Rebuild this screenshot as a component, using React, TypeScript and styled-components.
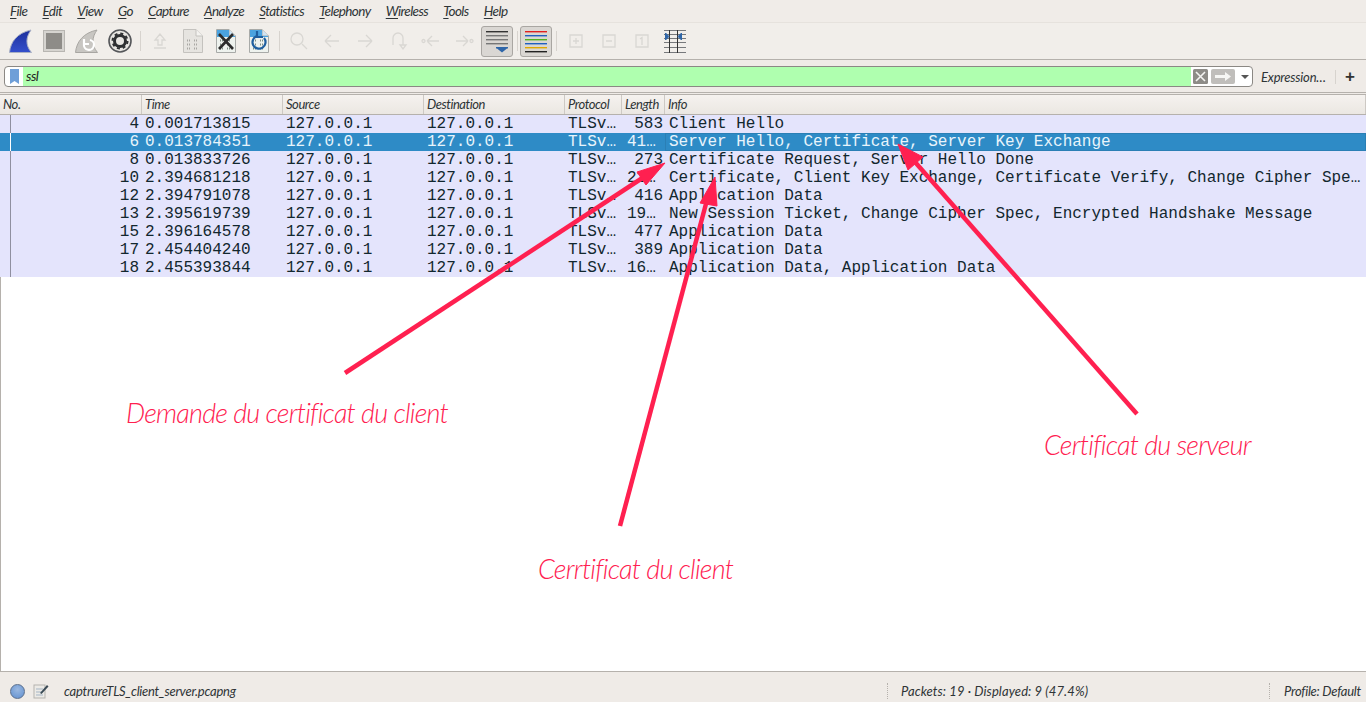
import styled, { createGlobalStyle } from "styled-components";

const GlobalStyle = createGlobalStyle`
  html, body {
    margin: 0;
    padding: 0;
    height: 100%;
    overflow: hidden;
    background: #efebe7;
  }
`;

const uiFont = `"Lato", "Open Sans", sans-serif`;
const columns = "142px 141px 141px 141px 57px 43px 1fr";
const accent = "#ff2050";

const Window = styled.div`
  position: relative;
  width: 1366px;
  height: 702px;
  display: flex;
  flex-direction: column;
  overflow: hidden;
  background: #efebe7;
  font-family: ${uiFont};
  font-style: italic;
  font-size: 13px;
  color: #2e3436;
`;

const MenuBar = styled.div`
  height: 22px;
  display: flex;
  align-items: center;
  padding: 0 0 1px 10px;
  gap: 15.2px;
  background: #f0ece8;
  box-sizing: border-box;
`;

const MenuItem = styled.span`
  font-size: 13.5px;
  letter-spacing: -0.6px;
  color: #2e3436;
  & u {
    text-underline-offset: 2px;
  }
`;

const ToolBar = styled.div`
  height: 38px;
  display: flex;
  align-items: center;
  box-sizing: border-box;
  padding-left: 4px;
  border-top: 1px solid #e6e2dd;
  border-bottom: 1px solid #b5b1ac;
  background: #f1eeea;
`;

const ToolSlot = styled.div<{ $pressed?: boolean }>`
  width: ${(p) => (p.$pressed ? 32 : 33)}px;
  height: 31px;
  display: flex;
  align-items: center;
  justify-content: center;
  flex: none;
  box-sizing: border-box;
  ${(p) =>
    p.$pressed &&
    `
    background: #dad7d3;
    border: 1px solid #a9a6a2;
    border-radius: 3px;
  `}
`;

const ToolSep = styled.div`
  width: 1px;
  height: 20px;
  margin: 0 2px 0 4px;
  background: #d7d3ce;
  flex: none;
`;

const PressedGap = styled.div`
  width: 1px;
  flex: none;
`;

const FilterRow = styled.div`
  height: 33px;
  display: flex;
  align-items: center;
  box-sizing: border-box;
  padding: 1px 8px 0 4px;
  background: #efebe7;
  border-bottom: 1px solid #b5b1ac;
`;

const FilterBox = styled.div`
  width: 1249px;
  height: 21px;
  display: flex;
  align-items: stretch;
  box-sizing: border-box;
  border: 1px solid #8b8884;
  border-radius: 4px;
  background: #fff;
  overflow: hidden;
  flex: none;
`;

const BookmarkCell = styled.div`
  width: 18px;
  display: flex;
  align-items: center;
  justify-content: center;
  flex: none;
`;

const FilterInput = styled.div`
  flex: 1;
  background: #afffaf;
  padding-left: 3px;
  font-size: 13.5px;
  letter-spacing: -0.5px;
  line-height: 18px;
  color: #222;
`;

const FilterActions = styled.div`
  width: 61px;
  display: flex;
  align-items: center;
  gap: 3px;
  padding-left: 2px;
  box-sizing: border-box;
  flex: none;
`;

const ExpressionLink = styled.span`
  margin-left: 8px;
  font-size: 13px;
  letter-spacing: -0.2px;
  width: 74px;
  flex: none;
`;

const FilterSep = styled.div`
  width: 1px;
  height: 14px;
  background: #d7d3ce;
  flex: none;
`;

const PlusButton = styled.span`
  margin-left: 9px;
  font: bold 17px "Liberation Sans", sans-serif;
  color: #333;
`;

const PacketPane = styled.div`
  flex: 1;
  margin-top: 1px;
  display: flex;
  flex-direction: column;
  background: #fff;
  border: 1px solid #b5b1ac;
  border-right: none;
  box-sizing: border-box;
  min-height: 0;
`;

const HeaderRow = styled.div`
  height: 20px;
  display: grid;
  grid-template-columns: ${columns};
  box-sizing: border-box;
  background: linear-gradient(#f5f2ef, #ebe7e2);
  border-bottom: 1px solid #b5b1ac;
  margin-left: -1px;
`;

const HeaderCell = styled.div`
  padding-left: 3px;
  line-height: 19px;
  font-size: 13px;
  letter-spacing: -0.45px;
  border-right: 1px solid #cdc9c4;
  white-space: nowrap;
  overflow: hidden;
  box-sizing: border-box;
`;

const PacketRow = styled.div<{ $selected?: boolean }>`
  position: relative;
  height: 18px;
  display: grid;
  grid-template-columns: ${columns};
  margin-left: -1px;
  background: ${(p) => (p.$selected ? "#2e8bc6" : "#e4e4fc")};
  color: ${(p) => (p.$selected ? "#e8f4fb" : "#12272e")};
  font: 16px/18px "Liberation Mono", monospace;
  white-space: nowrap;
`;

// the thin conversation line on the left of the list
const ThreadLine = styled.span<{ $selected?: boolean }>`
  position: absolute;
  left: 10px;
  top: 0;
  bottom: 0;
  width: 1px;
  background: ${(p) => (p.$selected ? "#fff" : "#8f8fa0")};
`;

const Cell = styled.div<{ $right?: boolean; $pad?: number; $end?: number }>`
  overflow: hidden;
  box-sizing: border-box;
  text-align: ${(p) => (p.$right ? "right" : "left")};
  padding-left: ${(p) => p.$pad ?? 3}px;
  padding-right: ${(p) => p.$end ?? 0}px;
`;

const InfoCell = styled(Cell)<{ $focus?: boolean }>`
  padding-left: 4px;
  ${(p) => p.$focus && "outline: 1px solid #2a7fb5; outline-offset: -1px;"}
`;

const StatusBar = styled.div`
  height: 30px;
  flex: none;
  display: flex;
  align-items: center;
  position: relative;
  box-sizing: border-box;
  padding-top: 8px;
  background: #efebe7;
  font-size: 13px;
  letter-spacing: -0.25px;
`;

const StatusDot = styled.span`
  width: 13px;
  height: 13px;
  margin-left: 10px;
  border-radius: 50%;
  background: radial-gradient(circle at 50% 35%, #9ab8e0, #5f8fd0);
  border: 1px solid #5b6f8c;
  flex: none;
`;

const EditIcon = styled.svg`
  margin-left: 8px;
  flex: none;
`;

const FileName = styled.span`
  margin-left: 15px;
  width: 823px;
  flex: none;
`;

const Grip = styled.div`
  position: absolute;
  left: 676px;
  top: 2px;
  width: 16px;
  height: 5px;
  background-image: radial-gradient(#b5b1ac 0.6px, transparent 0.7px);
  background-size: 2px 2px;
`;

const StatusSep = styled.span`
  height: 16px;
  border-left: 1px dotted #b5b1ac;
  flex: none;
`;

const PacketCount = styled.span`
  margin-left: 13px;
  width: 368px;
  flex: none;
  letter-spacing: 0.1px;
  white-space: nowrap;
`;

const ProfileText = styled.span`
  margin-left: 14px;
  white-space: nowrap;
`;

const Arrows = styled.svg`
  position: absolute;
  inset: 0;
  pointer-events: none;
`;

const Note = styled.div<{ $x: number; $y: number }>`
  position: absolute;
  left: ${(p) => p.$x}px;
  top: ${(p) => p.$y}px;
  font-family: ${uiFont};
  font-style: italic;
  font-weight: 300;
  font-size: 27px;
  line-height: 32px;
  color: ${accent};
  white-space: nowrap;
  letter-spacing: -0.78px;
`;

function SharkFin({ grey }: { grey?: boolean }) {
  return (
    <svg width="24" height="25" viewBox="0 0 24 25">
      <defs>
        <linearGradient id="finBlue" x1="0" y1="0" x2="0" y2="1">
          <stop offset="0" stopColor="#1c2f9c" />
          <stop offset="1" stopColor="#3550cc" />
        </linearGradient>
      </defs>
      <path
        d="M0.5 23.5 C1.5 13 8 4 22 1 C17 8 16 16 22.5 23.5 Z"
        fill={grey ? "#c8c6c2" : "url(#finBlue)"}
        stroke={grey ? "#a8a6a2" : "#a9b0c4"}
        strokeWidth="1"
      />
      {grey && (
        <path d="M15 11 a5 5 0 1 1 -6 4 M9 10 v5 h5" stroke="#fff" strokeWidth="2.2" fill="none" />
      )}
    </svg>
  );
}

function StopIcon() {
  return (
    <svg width="22" height="22" viewBox="0 0 22 22">
      <rect x="0.5" y="0.5" width="21" height="21" fill="#d6d4d0" stroke="#b8b6b2" />
      <rect x="3" y="3" width="16" height="16" fill="#8e8c88" />
    </svg>
  );
}

function GearIcon() {
  return (
    <svg width="24" height="24" viewBox="0 0 24 24">
      <circle cx="12" cy="12" r="11" fill="#e8e6e2" stroke="#55575a" strokeWidth="1.6" />
      <circle cx="12" cy="12" r="5.5" fill="none" stroke="#2e3032" strokeWidth="3" />
      <circle cx="12" cy="12" r="7.5" fill="none" stroke="#2e3032" strokeWidth="2" strokeDasharray="3 2.9" />
    </svg>
  );
}

function FileIcon({ kind }: { kind: "plain" | "close" | "reload" }) {
  const faded = kind === "plain";
  return (
    <svg width="20" height="24" viewBox="0 0 20 24">
      <path
        d="M0.5 0.5 H13 L19.5 7 V23.5 H0.5 Z"
        fill={faded ? "#e6e4e0" : "#eef2ee"}
        stroke={faded ? "#c4c2be" : "#a8aaa8"}
      />
      <path d="M13 0.5 V7 H19.5" fill={faded ? "#f4f3f0" : "#cfe4f4"} stroke={faded ? "#c4c2be" : "#a8aaa8"} />
      {!faded && <path d="M1 1 H13 V7 H19 V8 H1 Z" fill="#4aa3e0" />}
      <path
        d="M4 11.5h4M11 11.5h4M4 15.5h4M11 15.5h4M4 19.5h4M11 19.5h4"
        stroke={faded ? "#a9a7a3" : "#7f8f85"}
        strokeDasharray="1 1"
        strokeWidth="2"
      />
      {kind === "close" && <path d="M3 5 L17 20 M17 5 L3 20" stroke="#2c2c2c" strokeWidth="2.6" />}
      {kind === "reload" && (
        <path d="M15 9 a6.5 6.5 0 1 1 -7 -2 M8 2 v6 h6" stroke="#1f5f9f" strokeWidth="2.2" fill="none" />
      )}
    </svg>
  );
}

function Faint({ d }: { d: string }) {
  return (
    <svg width="20" height="20" viewBox="0 0 20 20" fill="none" stroke="#d9d7d3" strokeWidth="1.3">
      <path d={d} />
    </svg>
  );
}

function LinesIcon({ colors, marker }: { colors: string[]; marker?: boolean }) {
  return (
    <svg width="22" height="23" viewBox="0 0 22 23">
      {colors.map((c, i) => (
        <rect key={i} x="0" y={1 + i * 4} width="22" height="1.4" fill={c} />
      ))}
      {marker && <path d="M10 17 h12 v1.5 h-12 Z M11 18.5 h10 l-5 4 Z" fill="#2f66a8" />}
    </svg>
  );
}

function ResizeColumnsIcon() {
  return (
    <svg width="22" height="23" viewBox="0 0 22 23">
      {[0, 4, 8, 12, 17, 22].map((y) => (
        <rect key={y} x="0" y={y} width="22" height="1" fill="#77797c" />
      ))}
      <rect x="5" y="0" width="1" height="23" fill="#333" />
      <rect x="13" y="0" width="1" height="23" fill="#333" />
      <path d="M1.5 3 L5 6.5 L1.5 10 Z M17.5 3 L14 6.5 L17.5 10 Z" fill="#2f66a8" stroke="#2f66a8" />
    </svg>
  );
}

const menus: [string, string][] = [
  ["F", "ile"],
  ["E", "dit"],
  ["V", "iew"],
  ["G", "o"],
  ["C", "apture"],
  ["A", "nalyze"],
  ["S", "tatistics"],
  ["T", "elephony"],
  ["W", "ireless"],
  ["T", "ools"],
  ["H", "elp"],
];

const headers = ["No.", "Time", "Source", "Destination", "Protocol", "Length", "Info"];

const packets = [
  ["4", "0.001713815", "583", "Client Hello"],
  ["6", "0.013784351", "41…", "Server Hello, Certificate, Server Key Exchange"],
  ["8", "0.013833726", "273", "Certificate Request, Server Hello Done"],
  ["10", "2.394681218", "21…", "Certificate, Client Key Exchange, Certificate Verify, Change Cipher Spe…"],
  ["12", "2.394791078", "416", "Application Data"],
  ["13", "2.395619739", "19…", "New Session Ticket, Change Cipher Spec, Encrypted Handshake Message"],
  ["15", "2.396164578", "477", "Application Data"],
  ["17", "2.454404240", "389", "Application Data"],
  ["18", "2.455393844", "16…", "Application Data, Application Data"],
];

export default function App() {
  return (
    <Window>
      <GlobalStyle />
      <MenuBar>
        {menus.map(([key, rest], i) => (
          <MenuItem key={i}>
            <u>{key}</u>
            {rest}
          </MenuItem>
        ))}
      </MenuBar>

      <ToolBar>
        <ToolSlot><SharkFin /></ToolSlot>
        <ToolSlot><StopIcon /></ToolSlot>
        <ToolSlot><SharkFin grey /></ToolSlot>
        <ToolSlot><GearIcon /></ToolSlot>
        <ToolSep />
        <ToolSlot><Faint d="M10 3 L5 9 H8 V14 H12 V9 H15 Z M4 17 H16" /></ToolSlot>
        <ToolSlot><FileIcon kind="plain" /></ToolSlot>
        <ToolSlot><FileIcon kind="close" /></ToolSlot>
        <ToolSlot><FileIcon kind="reload" /></ToolSlot>
        <ToolSep />
        <ToolSlot><Faint d="M13 13 L18 18 M14 8 a6 6 0 1 1 -12 0 a6 6 0 1 1 12 0" /></ToolSlot>
        <ToolSlot><Faint d="M3 10 H17 M3 10 L9 4 M3 10 L9 16" /></ToolSlot>
        <ToolSlot><Faint d="M3 10 H17 M17 10 L11 4 M17 10 L11 16" /></ToolSlot>
        <ToolSlot><Faint d="M5 14 V7 a5 5 0 0 1 10 0 V14 M12 14 h6 l-3 4 Z" /></ToolSlot>
        <ToolSlot><Faint d="M6 10 H18 M6 10 L11 5 M6 10 L11 15 M1 10 a1.5 1.5 0 1 0 3 0 a1.5 1.5 0 1 0 -3 0" /></ToolSlot>
        <ToolSlot><Faint d="M2 10 H14 M14 10 L9 5 M14 10 L9 15 M16 10 a1.5 1.5 0 1 0 3 0 a1.5 1.5 0 1 0 -3 0" /></ToolSlot>
        <PressedGap />
        <ToolSlot $pressed>
          <LinesIcon colors={["#333", "#777", "#777", "#777"]} marker />
        </ToolSlot>
        <ToolSep />
        <ToolSlot $pressed>
          <LinesIcon colors={["#e02020", "#2060c0", "#50b020", "#2060c0", "#e0a800", "#222"]} />
        </ToolSlot>
        <ToolSep />
        <ToolSlot><Faint d="M4 4 H16 V16 H4 Z M7 10 H13 M10 7 V13" /></ToolSlot>
        <ToolSlot><Faint d="M4 4 H16 V16 H4 Z M7 10 H13" /></ToolSlot>
        <ToolSlot><Faint d="M4 4 H16 V16 H4 Z M8 8 L10 6.5 V14" /></ToolSlot>
        <ToolSlot><ResizeColumnsIcon /></ToolSlot>
      </ToolBar>

      <FilterRow>
        <FilterBox>
          <BookmarkCell>
            <svg width="9" height="15" viewBox="0 0 9 15">
              <path d="M0 0 H9 V15 L4.5 12 L0 15 Z" fill="#6f9fd8" />
            </svg>
          </BookmarkCell>
          <FilterInput>ssl</FilterInput>
          <FilterActions>
            <svg width="15" height="15" viewBox="0 0 15 15">
              <rect width="15" height="15" rx="1.5" fill="#8e8c88" />
              <path d="M3 3 L12 12 M12 3 L3 12" stroke="#f4f4f2" strokeWidth="1.6" />
            </svg>
            <svg width="24" height="15" viewBox="0 0 24 15">
              <rect width="24" height="15" rx="2" fill="#c0bebb" />
              <path d="M4 6 H14 V3 L20 7.5 L14 12 V9 H4 Z" fill="#f6f6f4" />
            </svg>
            <svg width="14" height="15" viewBox="0 0 14 15">
              <path d="M3 6 H11 L7 10 Z" fill="#555" />
            </svg>
          </FilterActions>
        </FilterBox>
        <ExpressionLink>Expression…</ExpressionLink>
        <FilterSep />
        <PlusButton>+</PlusButton>
      </FilterRow>

      <PacketPane>
        <HeaderRow>
          {headers.map((h) => (
            <HeaderCell key={h}>{h}</HeaderCell>
          ))}
        </HeaderRow>
        {packets.map(([no, time, len, info], i) => {
          const elided = len.endsWith("…");
          return (
            <PacketRow key={no} $selected={i === 1}>
              <ThreadLine $selected={i === 1} />
              <Cell $right $end={3}>{no}</Cell>
              <Cell>{time}</Cell>
              <Cell>127.0.0.1</Cell>
              <Cell>127.0.0.1</Cell>
              <Cell>TLSv…</Cell>
              <Cell $right={!elided} $pad={elided ? 5 : 0} $end={elided ? 0 : 2}>{len}</Cell>
              <InfoCell $focus={i === 1}>{info}</InfoCell>
            </PacketRow>
          );
        })}
      </PacketPane>

      <StatusBar>
        <Grip />
        <StatusDot />
        <EditIcon width="16" height="16" viewBox="0 0 16 16">
          <rect x="1" y="2" width="11" height="13" fill="#eceae6" stroke="#b5b3af" />
          <path d="M3 6h7M3 9h7M3 12h7" stroke="#a5b5c5" />
          <path d="M7 10 L14 2 L15.5 3.5 L8.5 11 Z" fill="#3a4a55" />
        </EditIcon>
        <FileName>captrureTLS_client_server.pcapng</FileName>
        <StatusSep />
        <PacketCount>Packets: 19 · Displayed: 9 (47.4%)</PacketCount>
        <StatusSep />
        <ProfileText>Profile: Default</ProfileText>
      </StatusBar>

      <Arrows width="1366" height="702" viewBox="0 0 1366 702">
        <g stroke={accent} strokeWidth="4.5" fill={accent}>
          <path d="M345 373 L650 173" fill="none" />
          <path d="M665 163 L637 172 L646 185 Z" strokeWidth="1" />
          <path d="M620 526 L707 200" fill="none" />
          <path d="M715 177 L700 203 L717 206 Z" strokeWidth="1" />
          <path d="M1137 414 L915 162" fill="none" />
          <path d="M898 144 L908 170 L923 157 Z" strokeWidth="1" />
        </g>
      </Arrows>

      <Note $x={126} $y={397}>Demande du certificat du client</Note>
      <Note $x={1044} $y={429}>Certificat du serveur</Note>
      <Note $x={538} $y={553}>Cerrtificat du client</Note>
    </Window>
  );
}
